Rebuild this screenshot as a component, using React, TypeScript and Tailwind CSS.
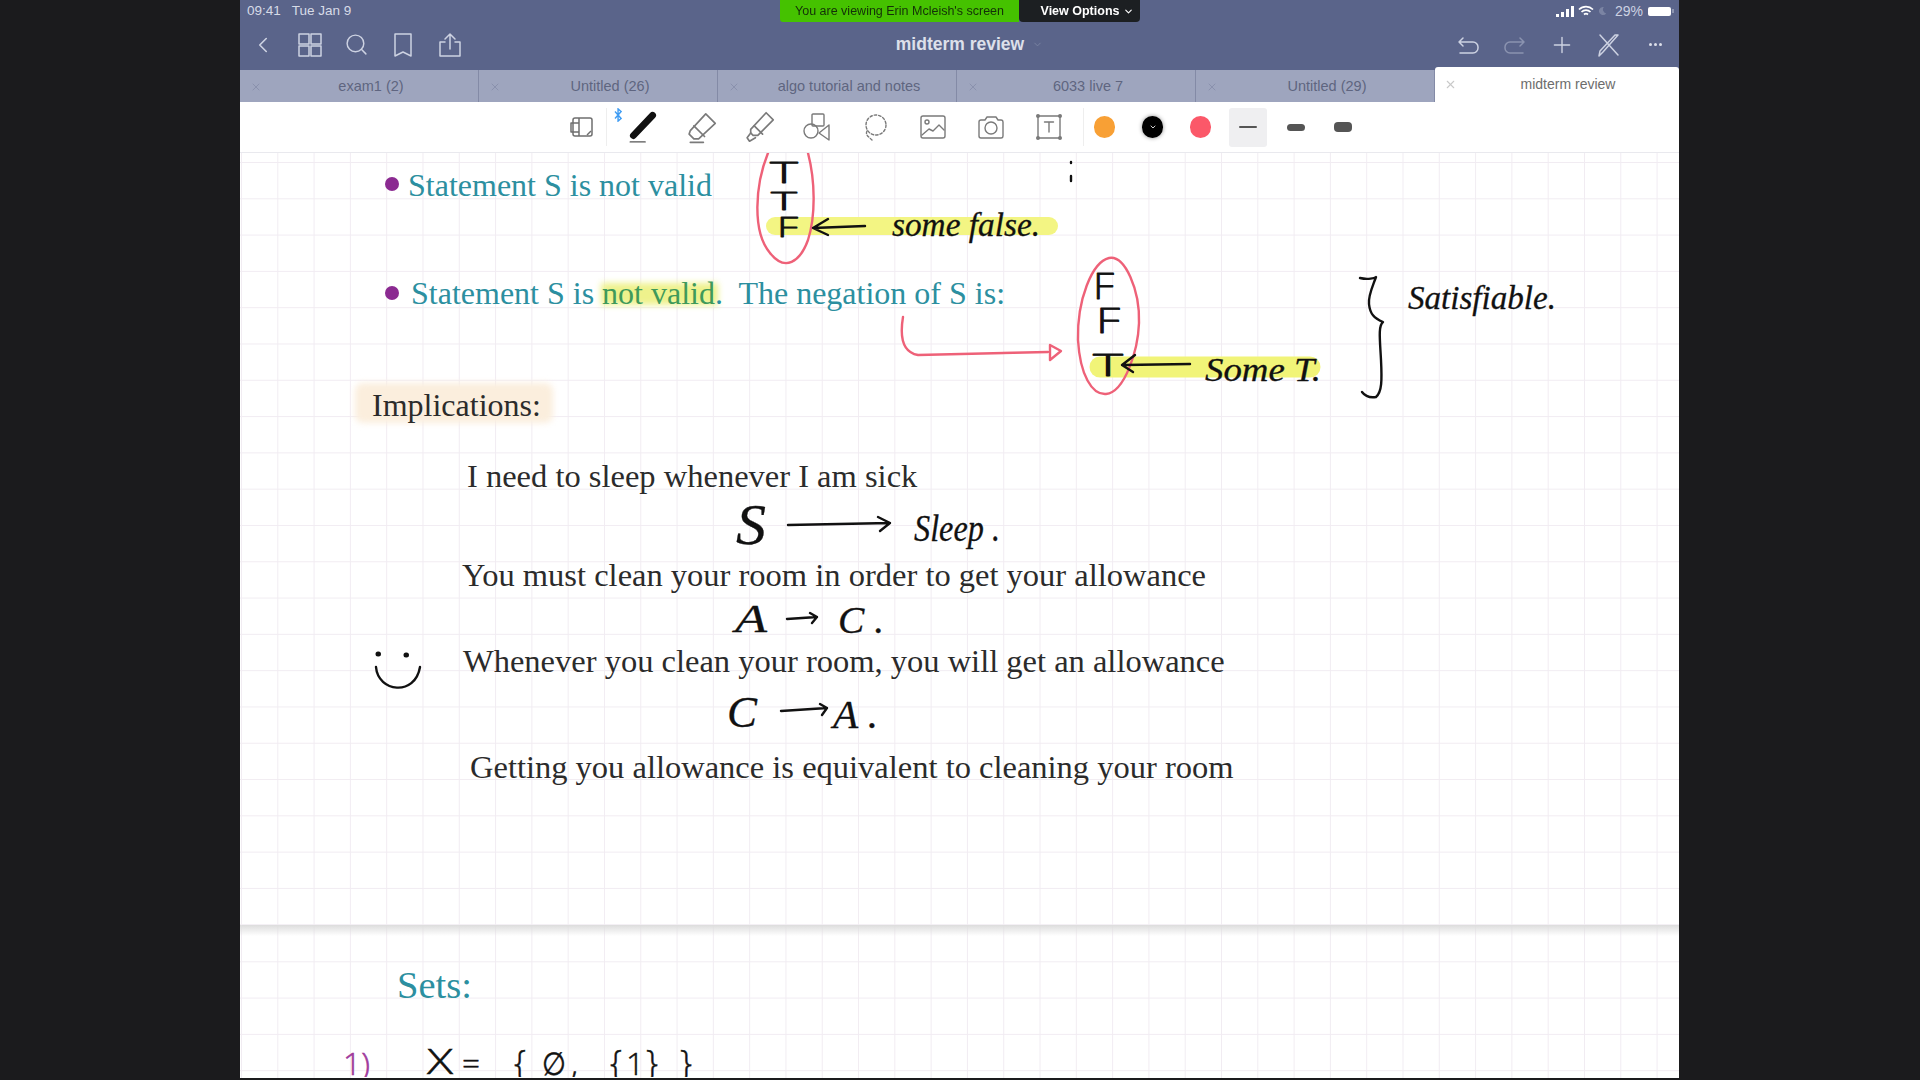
import { ChevronDown, ChevronLeft, Plus, Search, X } from 'lucide-react'

const tabs = ['exam1 (2)', 'Untitled (26)', 'algo tutorial and notes', '6033 live 7', 'Untitled (29)']

const serif = 'font-["Liberation_Serif",serif]'

function TopIcon({ children, className = 'h-[26px] w-[26px]' }: { children: React.ReactNode; className?: string }) {
  return (
    <svg viewBox="0 0 26 26" fill="none" stroke="currentColor" strokeWidth="1.5" strokeLinecap="round" strokeLinejoin="round" className={className}>
      {children}
    </svg>
  )
}

function Tool({ children, className = 'h-8 w-8' }: { children: React.ReactNode; className?: string }) {
  return (
    <div className="flex w-[58px] items-center justify-center">
      <svg viewBox="0 0 32 32" fill="none" stroke="#7a7a7a" strokeWidth="1.4" strokeLinecap="round" strokeLinejoin="round" className={className}>
        {children}
      </svg>
    </div>
  )
}

function Toolbar() {
  return (
    <div className="flex h-[51px] items-center border-b border-[#e9e9ee] bg-white pl-[328px]">
      <svg viewBox="0 0 26 26" fill="none" stroke="#6f6f6f" strokeWidth="1.5" strokeLinejoin="round" className="h-[26px] w-[26px]">
        <rect x="5" y="4" width="19" height="18" rx="2" />
        <path d="M11 4v18M3 9h8v9H3z" />
        <path d="M19 21l4-4" />
      </svg>
      <div className="ml-[12px] h-[38px] w-px bg-[#eeeeee]" />
      <div className="relative ml-[7px] flex">
        <svg viewBox="0 0 10 16" fill="none" stroke="#3f9cf3" strokeWidth="1.6" className="absolute left-0 top-0 h-[14px] w-[9px]">
          <path d="M1 4l7 8-3.5 3V1L8 4 1 12" />
        </svg>
        <Tool className="h-[34px] w-[34px]">
          <path d="M7 24L25 5" stroke="#111" strokeWidth="6.500" />
          <path d="M4 30h14" stroke="#555" />
        </Tool>
        <Tool className="h-[38px] w-[38px]">
          <path d="M7 19L20 5l8 8-14 13-4 0-4-4z" />
          <path d="M10 15l9 9M7 29h11" />
        </Tool>
        <Tool className="h-[38px] w-[38px]">
          <path d="M9 18L22 4l6 6-13 13-4 0-2-2z" />
          <path d="M9 21l-3 4 2 3 5-3M12 15l7 7" />
        </Tool>
        <Tool>
          <rect x="11" y="3" width="12" height="12" rx="1" />
          <circle cx="10" cy="20" r="7" />
          <path d="M28 14v15l-10-7z" />
        </Tool>
        <Tool>
          <circle cx="17" cy="14" r="10" strokeDasharray="2.500 2" />
          <path d="M8 20c-2 4 2 6 5 9" strokeDasharray="2.500 2" />
        </Tool>
        <Tool>
          <rect x="4" y="5" width="24" height="22" rx="2" />
          <circle cx="10" cy="11" r="2" />
          <path d="M5 24l7-6 4 2 6-6 5 5" />
        </Tool>
        <Tool>
          <path d="M4 11a2 2 0 012-2h4l2-3h9l2 3h3a2 2 0 012 2v14a2 2 0 01-2 2H6a2 2 0 01-2-2z" />
          <circle cx="16" cy="17" r="6" />
        </Tool>
        <Tool>
          <rect x="5" y="5" width="22" height="22" />
          <path d="M11.500 11h9M16 11v10" />
          <circle cx="5" cy="5" r="1.300" fill="#7a7a7a" />
          <circle cx="27" cy="5" r="1.300" fill="#7a7a7a" />
          <circle cx="5" cy="27" r="1.300" fill="#7a7a7a" />
          <circle cx="27" cy="27" r="1.300" fill="#7a7a7a" />
        </Tool>
      </div>
      <div className="ml-[5px] h-[38px] w-px bg-[#eeeeee]" />
      <div className="ml-[10px] h-[22px] w-[21px] rounded-full bg-[#f8a035]" />
      <div className="ml-[27px] flex h-[22px] w-[21px] items-center justify-center rounded-full bg-black shadow-[0_0_4px_rgba(0,0,0,0.45)]">
        <ChevronDown size={8} strokeWidth={3} className="text-[#cfcfcf]" />
      </div>
      <div className="ml-[27px] h-[22px] w-[21px] rounded-full bg-[#fb5869]" />
      <div className="ml-[18px] flex h-[39px] w-[38px] items-center justify-center rounded-[3px] bg-[#efeff1]">
        <div className="h-[2px] w-[18px] rounded-full bg-[#555]" />
      </div>
      <div className="ml-[10px] flex w-[38px] justify-center">
        <div className="h-[7px] w-[18px] rounded-full bg-[#555]" />
      </div>
      <div className="ml-[9px] flex w-[38px] justify-center">
        <div className="h-[10px] w-[18px] rounded-[4px] bg-[#555]" />
      </div>
    </div>
  )
}

function PageOneInk() {
  const hand = 'font-["Liberation_Serif",serif] italic'
  const block = 'font-["Open_Sans",sans-serif] font-light'
  return (
    <svg viewBox="240 153 1439 772" fill="none" strokeLinecap="round" strokeLinejoin="round" className="absolute inset-0 h-[772px] w-[1439px]">
      <path d="M775 226h274" stroke="#f3f583" strokeWidth="18" />
      <path d="M1100 367h210" stroke="#f1f478" strokeWidth="21" />

      <path d="M768 153C755 185 752 232 770 253C785 272 800 262 808 240C816 215 815 180 808 153" stroke="#ee6178" strokeWidth="2.400" />
      <path d="M1109 258C1092 262 1077 300 1078 340C1080 375 1092 395 1106 394C1125 392 1138 350 1139 323C1140 290 1125 255 1109 258Z" stroke="#ee6178" strokeWidth="2.400" />
      <path d="M903 317C900 335 901 352 918 355L1048 352" stroke="#ee6178" strokeWidth="2.400" />
      <path d="M1050 345L1061 351L1050 360Z" stroke="#ee6178" strokeWidth="2.400" />

      <g stroke="#111" strokeWidth="2.400">
        <path d="M1071 162v1M1071 176v5" />
        <path d="M865 226L813 228M828 219L813 228L828 235" />
        <path d="M1190 364L1124 365M1135 355L1122 365L1133 372" />
        <path d="M1360 278C1368 280 1375 278 1376 277C1372 288 1368 296 1369 304C1370 314 1374 318 1383 322C1378 326 1380 340 1381 360C1382 380 1382 392 1376 397C1370 398 1365 396 1362 392" />
        <path d="M788 525L890 523M878 517L890 523L880 531" />
        <path d="M787 619L817 617M810 613L817 617L812 623" />
        <path d="M781 711L827 708M820 704L827 708L822 715" />
        <path d="M376 667C378 692 415 697 420 667" />
        <path d="M378 654h.5M406 655h.5" strokeWidth="5" />
      </g>

      <g fill="#111" stroke="#111" strokeWidth="0.800">
        <text x="770" y="183" fontSize="29" textLength="28" lengthAdjust="spacingAndGlyphs" className={block}>T</text>
        <text x="771" y="210" fontSize="26" textLength="26" lengthAdjust="spacingAndGlyphs" className={block}>T</text>
        <text x="777" y="237" fontSize="27" textLength="21" lengthAdjust="spacingAndGlyphs" className={block}>F</text>
        <text x="1093" y="299" fontSize="36" textLength="21" lengthAdjust="spacingAndGlyphs" className={block}>F</text>
        <text x="1096" y="333" fontSize="34" textLength="24" lengthAdjust="spacingAndGlyphs" className={block}>F</text>
        <text x="1093" y="376" fontSize="32" textLength="30" lengthAdjust="spacingAndGlyphs" className={block}>T</text>
      </g>
      <g fill="#111" stroke="#111" strokeWidth="0.300">
        <text x="892" y="236" fontSize="33" textLength="148" lengthAdjust="spacingAndGlyphs" className={hand}>some false.</text>
        <text x="1205" y="381" fontSize="33" textLength="116" lengthAdjust="spacingAndGlyphs" className={hand}>Some T.</text>
        <text x="1408" y="309" fontSize="33" textLength="148" lengthAdjust="spacingAndGlyphs" className={hand}>Satisfiable.</text>
        <text x="736" y="544" fontSize="56" textLength="30" lengthAdjust="spacingAndGlyphs" className={hand}>S</text>
        <text x="914" y="541" fontSize="38" textLength="86" lengthAdjust="spacingAndGlyphs" className={hand}>Sleep .</text>
        <text x="735" y="632" fontSize="40" textLength="32" lengthAdjust="spacingAndGlyphs" className={hand}>A</text>
        <text x="838" y="633" fontSize="38" textLength="46" lengthAdjust="spacingAndGlyphs" className={hand}>C .</text>
        <text x="727" y="727" fontSize="44" textLength="30" lengthAdjust="spacingAndGlyphs" className={hand}>C</text>
        <text x="833" y="728" fontSize="40" textLength="45" lengthAdjust="spacingAndGlyphs" className={hand}>A .</text>
      </g>
    </svg>
  )
}

function PageOne() {
  return (
    <div className="relative h-[772px] overflow-hidden bg-white bg-[linear-gradient(to_right,#f1ecf2_1px,transparent_1px),linear-gradient(to_bottom,#f1ecf2_1px,transparent_1px)] bg-[size:36.3px_36.3px] bg-[position:1px_9px]">
      <div className="absolute left-[361px] top-[130px] h-[22px] w-[117px] bg-[#eef28c] blur-[3px]" />
      <div className="absolute left-[115px] top-[230px] h-[40px] w-[198px] rounded-lg bg-[#fbeedd] blur-[3px]" />

      <div className="absolute left-[145px] top-[24px] h-[14px] w-[14px] rounded-full bg-[#8b2a91]" />
      <div className={`absolute left-[168px] top-[12px] text-[32px] leading-[40px] whitespace-nowrap text-[#2c8fa0] ${serif}`}>Statement S is not valid</div>

      <div className="absolute left-[145px] top-[133px] h-[14px] w-[14px] rounded-full bg-[#8b2a91]" />
      <div className={`absolute left-[171px] top-[120px] text-[32px] leading-[40px] whitespace-nowrap text-[#2c8fa0] ${serif}`}>
        Statement S is <span className="text-[#3f9a5a]">not valid</span>.&nbsp; The negation of S is:
      </div>

      <div className={`absolute left-[132px] top-[232px] text-[32px] leading-[40px] whitespace-nowrap text-[#2b2b2b] ${serif}`}>Implications:</div>
      <div className={`absolute left-[227px] top-[303px] text-[32.500px] leading-[40px] whitespace-nowrap text-[#2b2b2b] ${serif}`}>I need to sleep whenever I am sick</div>
      <div className={`absolute left-[222px] top-[402px] text-[32.500px] leading-[40px] whitespace-nowrap text-[#2b2b2b] ${serif}`}>You must clean your room in order to get your allowance</div>
      <div className={`absolute left-[223px] top-[488px] text-[32.500px] leading-[40px] whitespace-nowrap text-[#2b2b2b] ${serif}`}>Whenever you clean your room, you will get an allowance</div>
      <div className={`absolute left-[230px] top-[594px] text-[32.500px] leading-[40px] whitespace-nowrap text-[#2b2b2b] ${serif}`}>Getting you allowance is equivalent to cleaning your room</div>

      <PageOneInk />
    </div>
  )
}

function PageTwo() {
  const hand = 'font-["Open_Sans",sans-serif] font-light'
  return (
    <div className="relative flex-1 overflow-hidden bg-white bg-[linear-gradient(to_right,#f1ecf2_1px,transparent_1px),linear-gradient(to_bottom,#f1ecf2_1px,transparent_1px)] bg-[size:36.3px_36.3px] bg-[position:1px_0px]">
      <div className="h-[11px] bg-gradient-to-b from-[#dddddd] to-transparent" />
      <div className={`absolute left-[157px] top-[38px] text-[38.500px] leading-[44px] text-[#2c8fa0] ${serif}`}>Sets:</div>
      <svg viewBox="240 926 1439 152" className="absolute inset-0 h-[152px] w-[1439px]" strokeLinecap="round">
        <text x="343" y="1076" fontSize="32" fill="#a03a9c" stroke="#a03a9c" strokeWidth="0.600" className={hand}>1)</text>
        <g fill="#111" stroke="#111" strokeWidth="0.500" className={hand}>
          <text x="427" y="1075" fontSize="34" textLength="26" lengthAdjust="spacingAndGlyphs">X</text>
          <text x="462" y="1075" fontSize="30" textLength="18" lengthAdjust="spacingAndGlyphs">=</text>
          <text x="514" y="1076" fontSize="34">{'{'}</text>
          <text x="542" y="1076" fontSize="32" textLength="24" lengthAdjust="spacingAndGlyphs">∅</text>
          <text x="571" y="1076" fontSize="32">,</text>
          <text x="610" y="1076" fontSize="34">{'{'}</text>
          <text x="626" y="1076" fontSize="32">1</text>
          <text x="646" y="1076" fontSize="34">{'}'}</text>
          <text x="680" y="1076" fontSize="34">{'}'}</text>
        </g>
      </svg>
    </div>
  )
}

export default function App() {
  return (
    <div className="h-[1080px] w-[1920px] overflow-hidden bg-[#1b1b1d] font-['Liberation_Sans',sans-serif]">
      <div className="relative ml-[240px] flex h-[1078px] w-[1439px] flex-col overflow-hidden blur-[0.5px]">
        {/* zoom banner sits over the status bar */}
        <div className="absolute left-[540px] top-0 z-10 flex h-[22px] text-[12.500px] font-medium">
          <div className="flex w-[239px] items-center justify-center rounded-bl-[3px] bg-[#45c200] text-[#143008]">You are viewing Erin Mcleish's screen</div>
          <div className="flex w-[121px] items-center justify-center gap-1 rounded-b-[4px] bg-[#1c1f22] pl-[16px] font-bold text-white">
            View Options
            <ChevronDown size={11} strokeWidth={2.5} />
          </div>
        </div>

        <div className="h-[70px] bg-[#5a648a] text-[#cdd2e2]">
          <div className="flex h-[22px] items-center justify-between pl-[7px] pr-[5px] text-[13.500px]">
            <div className="flex gap-[11px] text-[#d7dbe7]">
              <span>09:41</span>
              <span>Tue Jan 9</span>
            </div>
            <div className="flex items-center text-[#d9dde8]">
              <svg viewBox="0 0 18 11" className="h-[11px] w-[18px] fill-white">
                <path d="M0 8h3v3H0zM5 6h3v5H5zM10 3h3v8h-3zM15 0h3v11h-3z" />
              </svg>
              <svg viewBox="0 0 16 12" fill="none" stroke="white" strokeWidth="1.700" className="ml-[4px] h-[12px] w-[16px]">
                <path d="M1 4.500a10 10 0 0114 0M3.500 7a6.500 6.500 0 019 0M6 9.500a3 3 0 014 0" />
              </svg>
              <svg viewBox="0 0 10 10" className="ml-[5px] h-[10px] w-[8px] fill-[#7b84a3]">
                <path d="M6 0a5 5 0 103 8A5 5 0 016 0z" />
              </svg>
              <span className="ml-[8px] text-[14px] text-[#cdd2e2]">29%</span>
              <div className="ml-[5px] h-[9px] w-[23px] rounded-[2px] bg-white" />
              <div className="ml-px h-[4px] w-[2px] bg-[#8d95b1]" />
            </div>
          </div>
          <div className="flex h-[45px] items-center justify-between">
            <div className="flex w-[230px] items-center gap-[21px] pl-[10px]">
              <ChevronLeft size={26} strokeWidth={1.5} />
              <TopIcon>
                <rect x="2" y="2" width="10" height="10" />
                <rect x="14" y="2" width="10" height="10" />
                <rect x="2" y="14" width="10" height="10" />
                <rect x="14" y="14" width="10" height="10" />
              </TopIcon>
              <Search size={25} strokeWidth={1.400} />
              <TopIcon>
                <path d="M5 2h16v22l-8-4-8 4z" />
              </TopIcon>
              <TopIcon>
                <path d="M8 10H3v14h20V10h-5M13 17V2M8 7l5-5 5 5" />
              </TopIcon>
            </div>
            <div className="flex items-center gap-2 pl-[20px] text-[17.500px] font-bold text-[#dde0ea]">
              midterm review
              <ChevronDown size={11} className="text-[#7b84a3]" />
            </div>
            <div className="flex w-[230px] items-center justify-end gap-[21px] pr-[10px]">
              <TopIcon>
                <path d="M4 10h14a5 5 0 015 5v1a5 5 0 01-5 5H5M8 6l-4 4 4 4" />
              </TopIcon>
              <TopIcon className="h-[26px] w-[26px] text-[#8b93b0]">
                <path d="M22 10H8a5 5 0 00-5 5v1a5 5 0 005 5h13M18 6l4 4-4 4" />
              </TopIcon>
              <Plus size={26} strokeWidth={1.300} />
              <TopIcon>
                <path d="M4 3l18 20M22 3L7 20l-4 4 1-5L19 3z" />
              </TopIcon>
              <div className="flex w-[26px] justify-center gap-[2px]">
                <span className="h-[3px] w-[3px] rounded-full bg-[#dde0ea]" />
                <span className="h-[3px] w-[3px] rounded-full bg-[#dde0ea]" />
                <span className="h-[3px] w-[3px] rounded-full bg-[#dde0ea]" />
              </div>
            </div>
          </div>
        </div>

        <div className="relative flex h-[32px] bg-[#9ea5be] text-[14.500px] text-[#5f6580]">
          {tabs.map(tab => (
            <div key={tab} className="relative flex w-[239px] items-center justify-center border-r border-[#838aa6] pl-[24px] pt-[1px]">
              <X size={12} className="absolute left-[10px] text-[#8a91ad]" />
              {tab}
            </div>
          ))}
          <div className="absolute bottom-0 right-0 flex h-[35px] w-[244px] items-center justify-center rounded-t-[3px] bg-white pl-[22px] text-[14px] text-[#6d6d6d]">
            <X size={13} className="absolute left-[9px] text-[#c9c9c9]" />
            midterm review
          </div>
        </div>

        <Toolbar />
        <PageOne />
        <PageTwo />
      </div>
    </div>
  )
}
